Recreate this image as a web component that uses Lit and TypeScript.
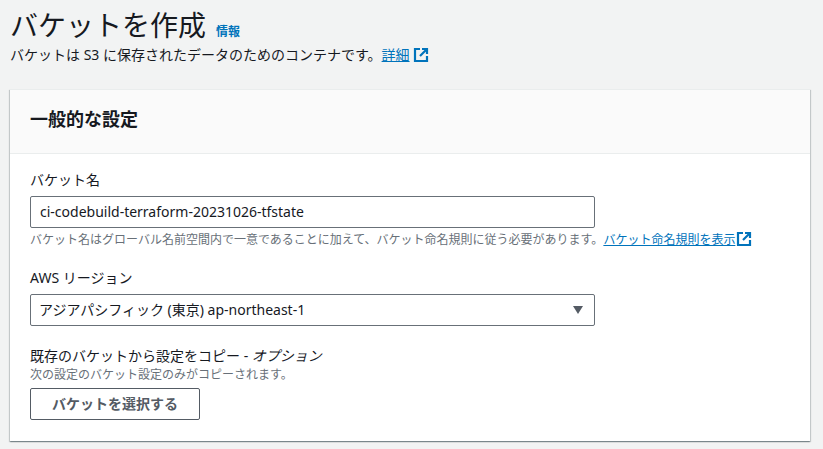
import { LitElement, html, css } from "lit";
import { customElement } from "lit/decorators.js";

const externalIcon = html`<svg class="ext" viewBox="0 0 16 16" width="16" height="16" fill="none" stroke="#0073bb" stroke-width="2.2"><path d="M7 2H2v12h12V9" /><path d="M9 2h5v5M14 2L7 9" /></svg>`;

@customElement("app-root")
export class AppRoot extends LitElement {
  static styles = css`
    :host {
      display: block;
      height: 449px;
      overflow: hidden;
      background: #f2f3f3;
      color: #16191f;
      font-family: "Noto Sans", "Noto Sans CJK JP", sans-serif;
      font-size: 14px;
      line-height: 20px;
    }
    .page {
      padding: 7px 13px 0 10px;
    }
    .title-row {
      display: flex;
      align-items: baseline;
      gap: 10px;
      height: 36px;
    }
    h1 {
      margin: 0;
      font-size: 28px;
      line-height: 36px;
      font-weight: 400;
    }
    .info {
      font-size: 12px;
      font-weight: 700;
      color: #0073bb;
    }
    .lead {
      margin: 2px 0 0;
      height: 20px;
      white-space: nowrap;
    }
    a {
      color: #0073bb;
      text-decoration: underline;
    }
    .ext {
      vertical-align: -3px;
    }
    .lead .ext {
      margin-left: 3px;
    }
    .hint .ext {
      margin-left: 1px;
    }
    .card {
      margin-top: 24px;
      background: #fff;
      box-shadow: 0 1px 1px 0 rgba(0, 28, 36, 0.3), 1px 1px 1px 0 rgba(0, 28, 36, 0.15), -1px 1px 1px 0 rgba(0, 28, 36, 0.15);
      border-top: 1px solid #eaeded;
    }
    .card-head {
      height: 64px;
      box-sizing: border-box;
      padding: 18px 20px 0;
      background: #fafafa;
      border-bottom: 1px solid #eaeded;
    }
    h2 {
      margin: 0;
      font-size: 18px;
      line-height: 22px;
      font-weight: 700;
    }
    .card-body {
      display: flex;
      flex-direction: column;
      gap: 20px;
      padding: 16px 20px 21px;
    }
    label {
      display: block;
      height: 20px;
      margin-bottom: 6px;
    }
    .box {
      display: flex;
      align-items: center;
      justify-content: space-between;
      box-sizing: border-box;
      width: 565px;
      height: 32px;
      padding: 0 9px;
      background: #fff;
      border: 1px solid #687078;
      border-radius: 2px;
    }
    .select {
      padding-left: 8px;
    }
    .arrow {
      width: 0;
      height: 0;
      margin-right: 2px;
      border-left: 5px solid transparent;
      border-right: 5px solid transparent;
      border-top: 8px solid #545b64;
    }
    .hint {
      font-size: 12px;
      line-height: 16px;
      color: #687078;
      white-space: nowrap;
    }
    .under {
      margin-top: 3px;
    }
    .copy label {
      margin-bottom: 1px;
    }
    .copy .hint {
      margin-bottom: 5px;
    }
    em {
      font-style: italic;
    }
    button {
      display: block;
      box-sizing: border-box;
      width: 170px;
      height: 32px;
      padding: 0;
      background: #fff;
      border: 1px solid #545b64;
      border-radius: 2px;
      color: #545b64;
      font: inherit;
      font-weight: 700;
    }
  `;

  render() {
    return html`
      <div class="page">
        <div class="title-row">
          <h1>バケットを作成</h1>
          <span class="info">情報</span>
        </div>
        <p class="lead">バケットは S3 に保存されたデータのためのコンテナです。<a href="#">詳細</a>${externalIcon}</p>

        <section class="card">
          <div class="card-head"><h2>一般的な設定</h2></div>
          <div class="card-body">
            <div>
              <label>バケット名</label>
              <div class="box">ci-codebuild-terraform-20231026-tfstate</div>
              <div class="hint under">
                バケット名はグローバル名前空間内で一意であることに加えて、バケット命名規則に従う必要があります。<a href="#">バケット命名規則を表示</a>${externalIcon}
              </div>
            </div>
            <div>
              <label>AWS リージョン</label>
              <div class="box select">
                <span>アジアパシフィック (東京) ap-northeast-1</span>
                <span class="arrow"></span>
              </div>
            </div>
            <div class="copy">
              <label>既存のバケットから設定をコピー - <em>オプション</em></label>
              <div class="hint">次の設定のバケット設定のみがコピーされます。</div>
              <button>バケットを選択する</button>
            </div>
          </div>
        </section>
      </div>
    `;
  }
}
